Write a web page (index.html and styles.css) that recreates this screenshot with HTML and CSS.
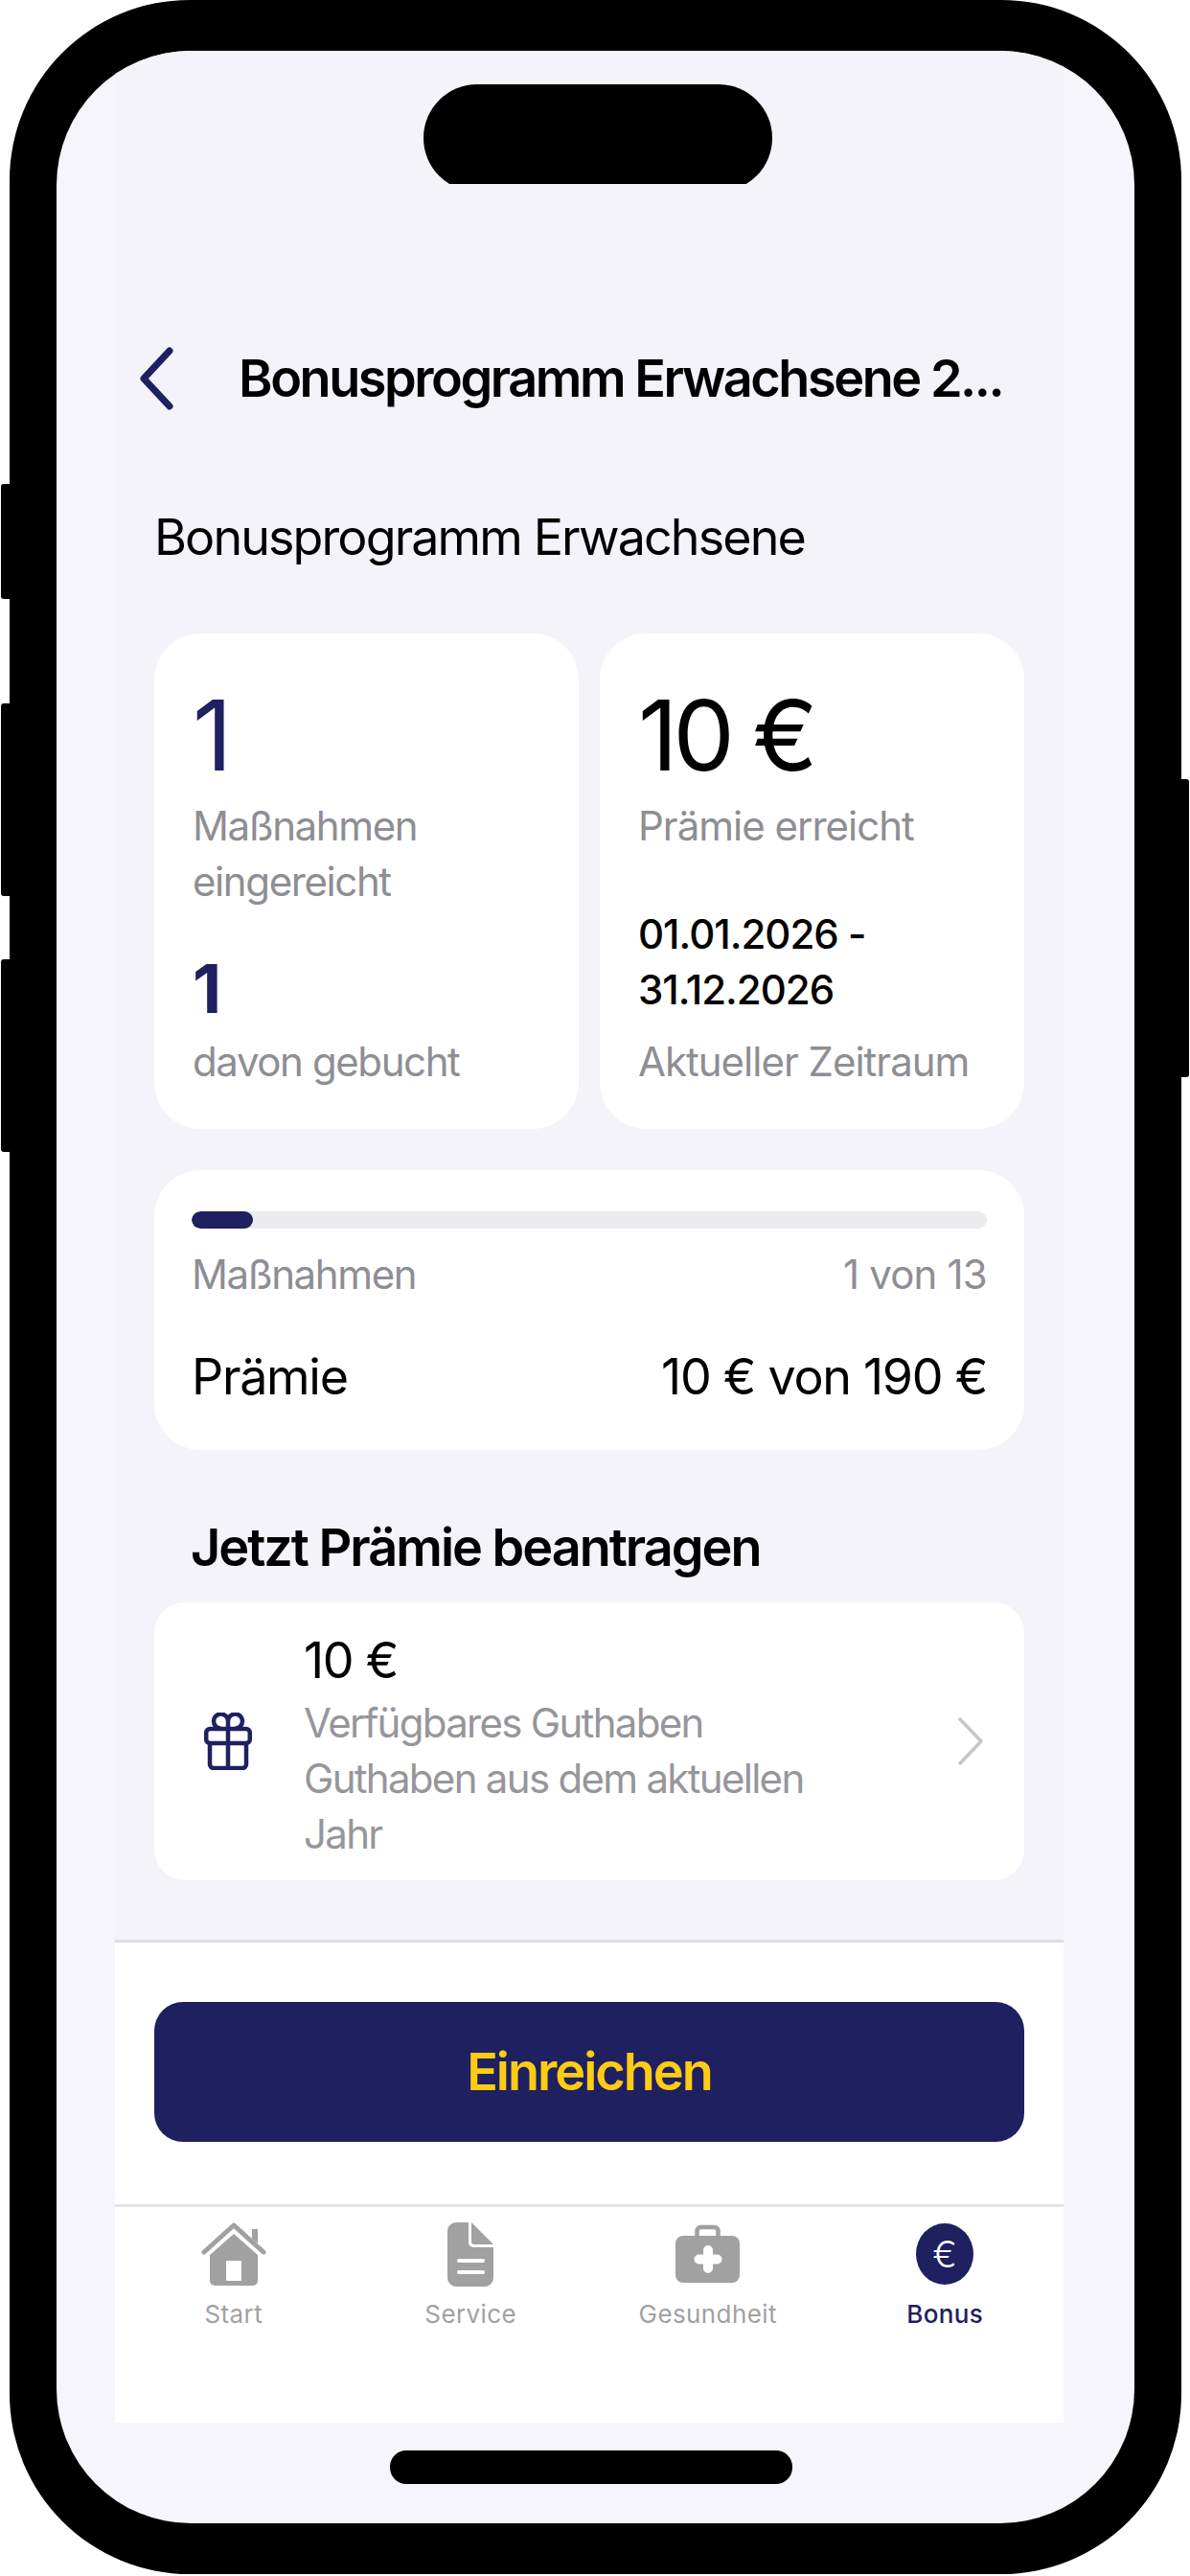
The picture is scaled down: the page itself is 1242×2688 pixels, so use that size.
FILE: index.html
```html
<!DOCTYPE html>
<html lang="de">
<head>
<meta charset="utf-8">
<title>Bonusprogramm</title>
<link rel="stylesheet" href="styles.css">
</head>
<body>
<div class="phone">
  <span class="side-btn left btn-a"></span>
  <span class="side-btn left btn-b"></span>
  <span class="side-btn left btn-c"></span>
  <span class="side-btn right btn-d"></span>
  <div class="screen">
    <div class="notch"><div class="notch-pill"></div></div>
    <main class="app">
      <header class="header">
        <svg class="back" viewBox="0 0 36 66" width="36" height="66"><path d="M32 4 5 33l27 29" fill="none" stroke="#1e2060" stroke-width="7" stroke-linecap="round" stroke-linejoin="round"/></svg>
        <h1 class="title">Bonusprogramm Erwachsene 2...</h1>
      </header>
      <div class="content">
        <h2 class="subtitle">Bonusprogramm Erwachsene</h2>
        <div class="stats">
          <section class="card stat">
            <div class="big navy">1</div>
            <div class="label first">Maßnahmen eingereicht</div>
            <div class="mid navy">1</div>
            <div class="label tight">davon gebucht</div>
          </section>
          <section class="card stat period">
            <div class="big">10 €</div>
            <div class="label first">Prämie erreicht</div>
            <div class="date">01.01.2026 - 31.12.2026</div>
            <div class="label after-date">Aktueller Zeitraum</div>
          </section>
        </div>
        <section class="card progress">
          <div class="bar"><div class="bar-fill" style="width:64px"></div></div>
          <div class="row muted"><span>Maßnahmen</span><span class="count">1 von 13</span></div>
          <div class="row strong"><span>Prämie</span><span>10 € von 190 €</span></div>
        </section>
        <h2 class="section-title">Jetzt Prämie beantragen</h2>
        <section class="card claim">
          <svg class="gift" viewBox="0 0 50 60" width="50" height="60" fill="none" stroke="#1e2060" stroke-width="4.5" stroke-linejoin="round">
            <rect x="2.2" y="17" width="45.6" height="15" rx="4"/>
            <path d="M6 32v22a4 4 0 0 0 4 4h30a4 4 0 0 0 4-4V32M25 16v42"/>
            <path d="M25 17v-8a7.5 7.5 0 1 0-7.5 7.5M25 17v-8a7.5 7.5 0 1 1 7.5 7.5"/>
          </svg>
          <div class="claim-text">
            <div class="claim-amount">10 €</div>
            <div class="claim-label">Verfügbares Guthaben</div>
            <div class="claim-label">Guthaben aus dem aktuellen Jahr</div>
          </div>
          <svg class="chev" viewBox="0 0 28 52" width="28" height="52"><path d="M3 3l22 23L3 49" fill="none" stroke="#c6c6c8" stroke-width="3.5" stroke-linecap="round" stroke-linejoin="round"/></svg>
        </section>
      </div>
      <div class="footer">
        <div class="submit-wrap"><button class="submit">Einreichen</button></div>
        <nav class="tabs">
          <a class="tab">
            <svg class="tab-icon" viewBox="0 0 68 67" width="68" height="67">
              <path d="M9 34 34 12l25 22v27a5 5 0 0 1-5 5H14a5 5 0 0 1-5-5z" fill="#a1a1a1"/>
              <path d="M3 31 34 3l31 28" fill="none" stroke="#a1a1a1" stroke-width="5" stroke-linecap="round" stroke-linejoin="round"/>
              <path d="M53 7h6v15l-6-5z" fill="#a1a1a1"/>
              <rect x="26" y="40" width="16" height="21" rx="1" fill="#fff"/>
            </svg>
            <span>Start</span>
          </a>
          <a class="tab">
            <svg class="tab-icon" viewBox="0 0 48 67" width="48" height="67">
              <path d="M9 0h13v21a5 5 0 0 0 5 5h21v32a9 9 0 0 1-9 9H9a9 9 0 0 1-9-9V9a9 9 0 0 1 9-9z" fill="#a1a1a1"/>
              <path d="M25 0 48 23H28a3 3 0 0 1-3-3z" fill="#a1a1a1"/>
              <path d="M12 40h25M12 52h25" stroke="#fff" stroke-width="4" stroke-linecap="round"/>
            </svg>
            <span>Service</span>
          </a>
          <a class="tab">
            <svg class="tab-icon" viewBox="0 0 67 67" width="67" height="67">
              <path d="M22.5 15V9a4 4 0 0 1 4-4h14a4 4 0 0 1 4 4v6" fill="none" stroke="#a1a1a1" stroke-width="4.5"/>
              <rect x="0" y="14" width="67" height="49" rx="8" fill="#a1a1a1"/>
              <path d="M34 29v19M24.5 38.500h19" stroke="#fff" stroke-width="10" stroke-linecap="round"/>
            </svg>
            <span>Gesundheit</span>
          </a>
          <a class="tab active">
            <span class="tab-icon euro"><span class="euro-sign">€</span></span>
            <span>Bonus</span>
          </a>
        </nav>
      </div>
    </main>
    <div class="home-indicator"></div>
  </div>
</div>
</body>
</html>
```
FILE: styles.css
```css
* { box-sizing: border-box; }
html, body { margin: 0; padding: 0; }
body {
  width: 1242px;
  height: 2688px;
  background: #fff;
  overflow: hidden;
  font-family: Inter, "Liberation Sans", sans-serif;
  color: #000;
}
.phone {
  position: relative;
  margin-left: 10px;
  width: 1223px;
  height: 2686px;
  padding: 53px 49px;
  background: #000;
  border-radius: 188px;
}
.side-btn { position: absolute; width: 10px; background: #000; }
.side-btn.left { left: -9px; border-radius: 3px 0 0 3px; }
.side-btn.right { right: -8px; width: 9px; border-radius: 0 3px 3px 0; }
.btn-a { top: 505px; height: 120px; }
.btn-b { top: 734px; height: 201px; }
.btn-c { top: 1001px; height: 201px; }
.btn-d { top: 813px; height: 311px; }
.screen {
  position: relative;
  display: flex;
  flex-direction: column;
  height: 2580px;
  padding: 0 74px 0 61px;
  background: #f5f5fb;
  border-radius: 140px;
  overflow: hidden;
}
.notch {
  position: absolute;
  left: 383px;
  top: 35px;
  width: 364px;
  height: 104px;
  overflow: hidden;
}
.notch-pill { height: 112px; background: #000; border-radius: 56px; }
.app {
  display: flex;
  flex-direction: column;
  height: 2475px;
  padding-top: 310px;
  background: #f3f3f9;
}
.header { display: flex; align-items: center; height: 64px; padding-left: 25px; }
.back { flex: none; }
.title {
  margin: 0 0 0 68px;
  font-size: 54px;
  line-height: 64px;
  font-weight: 600;
  letter-spacing: -2.45px;
  white-space: nowrap;
}
.content { padding: 104px 41px 0; }
.subtitle {
  margin: 0;
  font-size: 52px;
  line-height: 60px;
  font-weight: 400;
  letter-spacing: -1.9px;
}
.card { background: #fff; }
.stats { display: grid; grid-template-columns: 1fr 1fr; gap: 22px; margin-top: 70px; }
.stat { height: 517px; padding: 51px 30px 0 40px; border-radius: 48px; }
.navy { color: #1e2060; }
.big { font-size: 102px; line-height: 110px; letter-spacing: -5px; }
.mid { margin-top: 43px; font-size: 70px; line-height: 80px; font-weight: 700; }
.label { font-size: 42px; line-height: 58px; color: #8e8e93; letter-spacing: -1.4px; }
.period .label { letter-spacing: -1px; }
.label.first { margin-top: 11px; }
.label.tight { margin-top: 7px; }
.label.after-date { margin-top: 17px; }
.date { margin-top: 55px; font-size: 42px; line-height: 58px; font-weight: 500; letter-spacing: -1px; }
.progress { margin-top: 43px; height: 292px; padding: 43px 39px 0; border-radius: 48px; }
.bar { height: 18px; background: #ececee; border-radius: 9px; overflow: hidden; }
.bar-fill { height: 100%; background: #1e2060; border-radius: 9px; }
.row { display: flex; justify-content: space-between; }
.row.muted { margin-top: 19px; font-size: 42px; line-height: 58px; color: #8e8e93; letter-spacing: -1.4px; }
.row.muted .count { letter-spacing: -0.8px; }
.row.strong { margin-top: 46px; font-size: 52px; line-height: 64px; letter-spacing: -1.3px; }
.section-title {
  margin: 70px 0 0 38px;
  font-size: 54px;
  line-height: 64px;
  font-weight: 600;
  letter-spacing: -2px;
}
.claim {
  display: flex;
  align-items: center;
  margin-top: 25px;
  height: 290px;
  padding: 0 42px 0 52px;
  border-radius: 32px;
}
.gift { flex: none; }
.claim-text { flex: 1; margin: 10px 0 0 54px; max-width: 560px; }
.claim-amount { font-size: 52px; line-height: 64px; letter-spacing: -1.3px; }
.claim-label { font-size: 42px; line-height: 58px; color: #96969a; letter-spacing: -1.7px; }
.claim-amount + .claim-label { margin-top: 4px; }
.chev { flex: none; margin-left: auto; }
.footer {
  flex: 1;
  display: flex;
  flex-direction: column;
  margin-top: 62px;
  background: #fff;
  border-top: 3px solid #dedde5;
}
.submit-wrap { padding: 62px 41px 65px; border-bottom: 3px solid #e4e4e6; }
.submit {
  display: block;
  width: 100%;
  height: 146px;
  border: 0;
  border-radius: 30px;
  background: #1e2060;
  color: #ffcc14;
  font: 600 54px/64px Inter, "Liberation Sans", sans-serif;
  letter-spacing: -2px;
}
.tabs { display: grid; grid-template-columns: repeat(4, 1fr); padding-top: 16px; }
.tab {
  display: flex;
  flex-direction: column;
  align-items: center;
  font-size: 26px;
  line-height: 34px;
  letter-spacing: 0.4px;
  color: #a1a1a1;
}
.tab-icon { display: block; height: 67px; margin-bottom: 12px; }
.tab.active { color: #1e2060; font-weight: 500; }
.euro {
  display: flex;
  align-items: center;
  justify-content: center;
  width: 60px;
  height: 64px;
  margin-top: 1px;
  margin-bottom: 14px;
  background: #1e2060;
  border-radius: 50%;
}
.euro-sign { color: #fff; font-size: 38px; line-height: 38px; font-weight: 300; }
.home-indicator {
  flex: none;
  width: 420px;
  height: 35px;
  margin: 29px 0 0 287px;
  background: #000;
  border-radius: 17px;
}
```
